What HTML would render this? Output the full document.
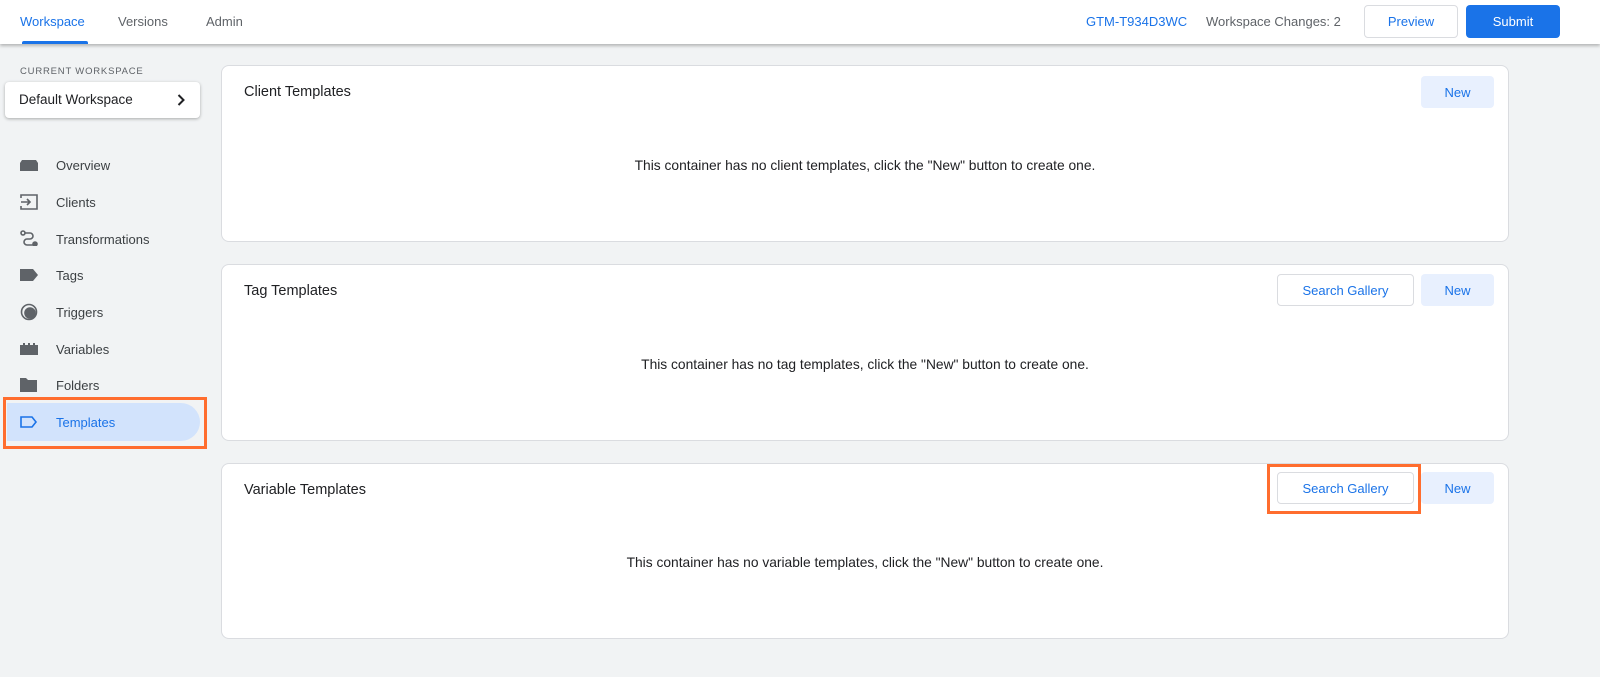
<!DOCTYPE html>
<html><head><meta charset="utf-8"><style>
*{box-sizing:border-box;margin:0;padding:0}
body{width:1600px;height:677px;background:#f1f3f4;font-family:"Liberation Sans",Arial,sans-serif;position:relative;overflow:hidden;color:#202124}
.top{position:absolute;left:0;top:0;width:1600px;height:44px;background:#fff;box-shadow:0 2px 3px rgba(0,0,0,.25);z-index:2}
.top span{position:absolute;top:14px;font-size:13px;color:#5f6368}
.ul{position:absolute;left:22px;top:41px;width:66px;height:3px;background:#1a73e8;border-radius:2px 2px 0 0}
.btn{position:absolute;height:32px;border-radius:4px;font-size:13px;display:flex;align-items:center;justify-content:center}
.cw{position:absolute;left:20px;top:66px;font-size:9.5px;letter-spacing:.8px;color:#5f6368}
.dw{position:absolute;left:5px;top:82px;width:195px;height:36px;background:#fff;border-radius:4px;box-shadow:0 1px 3px rgba(0,0,0,.3);font-size:13.5px;padding:10px 14px;font-weight:500}
.nav{position:absolute;left:56px;font-size:13px;color:#3c4043}
.ic{position:absolute;left:20px}
.card{position:absolute;left:221px;width:1288px;background:#fff;border:1px solid #dadce0;border-radius:8px}
.card h3{position:absolute;left:22px;top:18px;font-size:14.5px;font-weight:normal;color:#202124}
.card p{position:absolute;left:0;right:0;text-align:center;font-size:13.8px;color:#202124}
.new{background:#e8f0fe;color:#1a73e8;width:73px}
.sg{border:1px solid #dadce0;color:#1a73e8;width:137px;background:#fff}
</style></head><body>
<div class="top">
<span style="left:20px;color:#1a73e8">Workspace</span>
<span style="left:118px">Versions</span>
<span style="left:206px">Admin</span>
<div class="ul"></div>
<span style="left:1086px;color:#1a73e8">GTM-T934D3WC</span>
<span style="left:1206px">Workspace Changes: 2</span>
<div class="btn" style="left:1364px;top:5px;width:94px;height:33px;border:1px solid #dadce0;color:#1a73e8">Preview</div>
<div class="btn" style="left:1466px;top:5px;width:94px;height:33px;background:#1a73e8;color:#fff">Submit</div>
</div>
<div class="cw">CURRENT WORKSPACE</div>
<div class="dw">Default Workspace<svg style="position:absolute;right:15px;top:12px" width="8" height="12" fill="none" stroke="#202124" stroke-width="2"><path d="M1.5 1l5 5-5 5"/></svg></div>

<svg class="ic" style="top:157px" width="18" height="14"><path d="M2 3h14l2 3v8H0V6z" fill="#5f6368"/></svg>
<div class="nav" style="top:158px">Overview</div>
<svg class="ic" style="top:194px" width="18" height="16" fill="none" stroke="#5f6368" stroke-width="1.6"><path d="M1 4V1h16v14H1v-3M1 8h9M7 5l3 3-3 3"/></svg>
<div class="nav" style="top:195px">Clients</div>
<svg class="ic" style="top:230px" width="18" height="16" fill="none" stroke="#5f6368" stroke-width="1.6"><circle cx="3" cy="3" r="2"/><path d="M5 3h5a3 3 0 0 1 0 6H7a3 3 0 0 0 0 6h6"/><circle cx="15" cy="14" r="2" fill="#5f6368"/></svg>
<div class="nav" style="top:232px">Transformations</div>
<svg class="ic" style="top:269px" width="18" height="12"><path d="M0 0h13l5 6-5 6H0z" fill="#5f6368"/></svg>
<div class="nav" style="top:268px">Tags</div>
<svg class="ic" style="top:303px" width="18" height="18" fill="none" stroke="#5f6368" stroke-width="1.6"><circle cx="9" cy="9" r="7.5"/><circle cx="10" cy="10" r="5" fill="#5f6368"/></svg>
<div class="nav" style="top:305px">Triggers</div>
<svg class="ic" style="top:343px" width="18" height="12"><path d="M0 2h3V0h2v2h3V0h2v2h3V0h2v2h3v10H0z" fill="#5f6368"/></svg>
<div class="nav" style="top:342px">Variables</div>
<svg class="ic" style="top:378px" width="17" height="14"><path d="M0 0h6l2 2h9v12H0z" fill="#5f6368"/></svg>
<div class="nav" style="top:378px">Folders</div>
<div style="position:absolute;left:3px;top:397px;width:204px;height:52px;border:3px solid #ff6d2e"></div>
<div style="position:absolute;left:7px;top:403px;width:193px;height:38px;background:#d2e3fc;border-radius:0 20px 20px 0"></div>
<svg class="ic" style="top:416px" width="18" height="12" fill="none" stroke="#1a73e8" stroke-width="1.6"><path d="M1 1h11l4 5-4 5H1z"/></svg>
<div class="nav" style="top:415px;color:#1a73e8">Templates</div>

<div class="card" style="top:65px;height:177px"><h3>Client Templates</h3>
<div class="btn new" style="left:1199px;top:10px">New</div>
<p style="top:92px">This container has no client templates, click the "New" button to create one.</p></div>
<div class="card" style="top:264px;height:177px"><h3>Tag Templates</h3>
<div class="btn sg" style="left:1055px;top:9px">Search Gallery</div>
<div class="btn new" style="left:1199px;top:9px">New</div>
<p style="top:92px">This container has no tag templates, click the "New" button to create one.</p></div>
<div class="card" style="top:463px;height:176px"><h3>Variable Templates</h3>
<div class="btn sg" style="left:1055px;top:8px">Search Gallery</div>
<div class="btn new" style="left:1199px;top:8px">New</div>
<p style="top:91px">This container has no variable templates, click the "New" button to create one.</p></div>
<div style="position:absolute;left:1267px;top:464px;width:154px;height:50px;border:3px solid #ff6d2e"></div>
</body></html>
